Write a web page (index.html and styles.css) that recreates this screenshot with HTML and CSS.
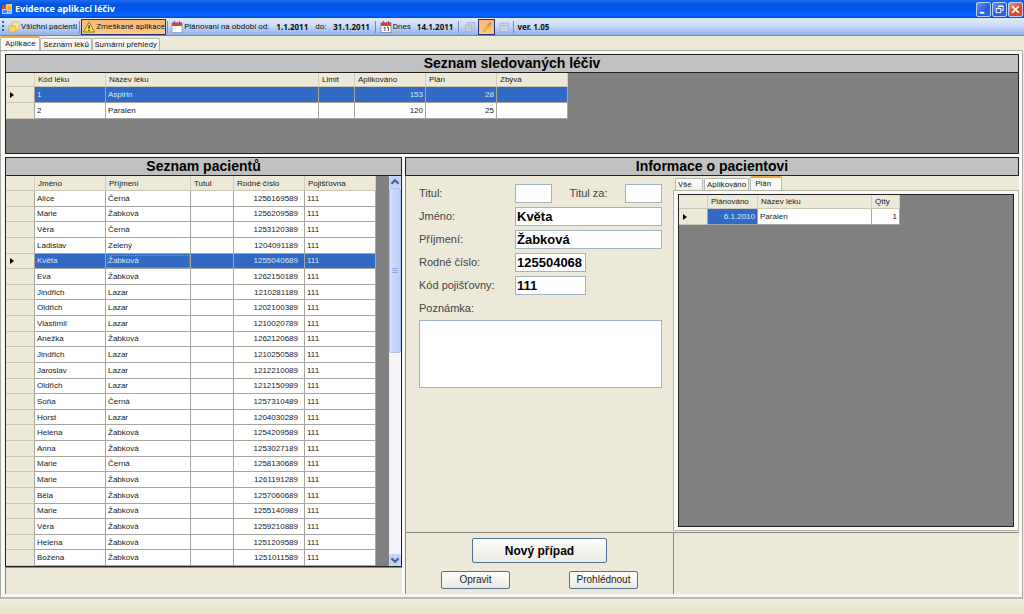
FILE: index.html
```html
<!DOCTYPE html>
<html lang="cs">
<head>
    <meta charset="UTF-8">
    <meta name="viewport" content="width=device-width, initial-scale=1.0">
    <title>Evidence aplikací léčiv</title>
    <link rel="stylesheet" href="styles.css">
</head>
<body>
    <header class="titlebar">
        <svg class="app-icon" viewBox="0 0 10 10" aria-hidden="true">
            <rect x="0" y="1" width="10" height="9" fill="#b9cdf2"/>
            <rect x="0" y="1" width="4" height="4" fill="#d9452b"/>
            <rect x="4" y="0" width="6" height="6" fill="#f4c54c"/>
            <rect x="1" y="6" width="4" height="3" fill="#4b86e8"/>
            <rect x="6" y="7" width="3" height="2" fill="#8aa9e0"/>
        </svg>
        <h1>Evidence aplikací léčiv</h1>
        <div class="window-buttons">
            <button class="win-button" aria-label="Minimalizovat">
                <svg viewBox="0 0 14 14"><path d="M3 10.500h5" stroke="#fff" stroke-width="2"/></svg>
            </button>
            <button class="win-button" aria-label="Obnovit">
                <svg viewBox="0 0 14 14" fill="none" stroke="#fff"><path d="M6 5V3.500h5V8H9"/><path d="M6 3.500h5" stroke-width="1.500"/><rect x="3.500" y="6" width="5" height="4.500"/></svg>
            </button>
            <button class="win-button close" aria-label="Zavřít">
                <svg viewBox="0 0 14 14"><path d="M3.500 3.500l7 7M10.500 3.500l-7 7" stroke="#fff" stroke-width="1.800"/></svg>
            </button>
        </div>
    </header>

    <div class="toolbar" role="toolbar">
        <span class="grip"></span>
        <button class="tool">
            <svg viewBox="0 0 12 12"><path d="M4 1h6l1 1v6l-2 1H4z" fill="#fbe9a0" stroke="#d9b24a" stroke-width=".7"/><path d="M1 5h6l1 1v4l-1 1H2L1 10z" fill="#f7d768" stroke="#cfa23a" stroke-width=".7"/></svg>
            Všichni pacienti
        </button>
        <span class="separator"></span>
        <button class="tool active">
            <svg viewBox="0 0 12 12"><path d="M6 1l5.500 10H.5z" fill="#ffe23c" stroke="#6b6420" stroke-width=".8" stroke-linejoin="round"/><path d="M6 4.200v3.600M6 8.800v1.200" stroke="#222" stroke-width="1.200"/></svg>
            Zmeškané aplikace
        </button>
        <span class="separator"></span>
        <span class="tool">
            <svg viewBox="0 0 12 12"><rect x="1" y="2" width="10" height="9.500" fill="#fff" stroke="#8a93a8" stroke-width=".7"/><rect x="1" y="1.500" width="10" height="3.500" fill="#d8414a"/><path d="M3.500 0v3M8.500 0v3" stroke="#666"/></svg>
            Plánovaní na období
        </span>
        <span class="text">od:</span>
        <b class="date">1.1.2011</b>
        <span class="text">do:</span>
        <b class="date">31.1.2011</b>
        <span class="separator wide"></span>
        <span class="tool">
            <svg viewBox="0 0 12 12"><rect x="1" y="2" width="10" height="9.500" fill="#fff" stroke="#6f7688" stroke-width=".7"/><rect x="1" y="1.500" width="10" height="3.500" fill="#d8414a"/><path d="M3.500 0v3M8.500 0v3" stroke="#666"/><path d="M3.500 6.500H5v3.500M7 6.500h1.500v3.500" fill="none" stroke="#333" stroke-width=".8"/></svg>
            Dnes
        </span>
        <b class="date today">14.1.2011</b>
        <span class="separator wide"></span>
        <button class="tool icon" aria-label="Kopírovat" disabled>
            <svg viewBox="0 0 12 12" fill="#c8d2e4" stroke="#a3b0c8" stroke-width=".8"><rect x="4" y="1.500" width="6.500" height="7"/><rect x="1.500" y="4" width="6" height="6.500"/><path d="M3 6.500h3M3 8.500h3"/></svg>
        </button>
        <button class="tool icon active" aria-label="Upravit">
            <svg viewBox="0 0 12 12"><path d="M2 11l1-3.500L8.500 2l2 2L5 9.500z" fill="#fbb040" stroke="#f09a3c" stroke-width=".7"/><path d="M7 4.500L10 1.500" stroke="#9c9468" stroke-width="1.500"/></svg>
        </button>
        <button class="tool icon" aria-label="Tabulka" disabled>
            <svg viewBox="0 0 12 12" fill="#c8d2e4" stroke="#a9b6cd" stroke-width=".8"><rect x="2" y="2" width="8.500" height="8.500"/><path d="M2 4.500h8.500"/></svg>
        </button>
        <span class="separator"></span>
        <b class="version">ver. 1.05</b>
    </div>

    <nav class="tabs main-tabs" role="tablist">
        <button class="tab selected" role="tab" aria-selected="true">Aplikace</button>
        <button class="tab" role="tab">Seznam léků</button>
        <button class="tab" role="tab">Sumární přehledy</button>
    </nav>

    <main class="page">
        <section class="medicines">
            <h2>Seznam sledovaných léčiv</h2>
            <div class="grid-view">
                <table class="data">
                    <colgroup><col class="c-mark"><col class="c-71"><col class="c-213"><col class="c-36"><col class="c-71"><col class="c-71"><col class="c-71"></colgroup>
                    <thead>
                        <tr><th></th><th>Kód léku</th><th>Název léku</th><th>Limit</th><th>Aplikováno</th><th>Plán</th><th>Zbývá</th></tr>
                    </thead>
                    <tbody>
                        <tr class="selected"><th class="current"></th><td>1</td><td>Aspirin</td><td></td><td class="num">153</td><td class="num">28</td><td></td></tr>
                        <tr><th></th><td>2</td><td>Paralen</td><td></td><td class="num">120</td><td class="num">25</td><td></td></tr>
                    </tbody>
                </table>
            </div>
        </section>

        <div class="columns">
            <section class="patients">
                <h2>Seznam pacientů</h2>
                <div class="grid-view">
                    <table class="data fill">
                        <colgroup><col class="c-mark"><col class="c-71"><col class="c-85"><col class="c-43"><col class="c-71"><col class="c-71"></colgroup>
                        <thead>
                            <tr><th></th><th>Jméno</th><th>Příjmení</th><th>Tutul</th><th>Rodné číslo</th><th>Pojišťovna</th></tr>
                        </thead>
                        <tbody id="patient-rows"></tbody>
                    </table>
                    <div class="scrollbar">
                        <button class="scroll-arrow" aria-label="Nahoru"><svg viewBox="0 0 10 10"><path d="M2 6.500l3-3 3 3" fill="none" stroke="#4d6185" stroke-width="1.800"/></svg></button>
                        <div class="scroll-track"><div class="scroll-thumb"></div></div>
                        <button class="scroll-arrow" aria-label="Dolů"><svg viewBox="0 0 10 10"><path d="M2 3.500l3 3 3-3" fill="none" stroke="#4d6185" stroke-width="1.800"/></svg></button>
                    </div>
                </div>
                <div class="footer-pane"></div>
            </section>

            <section class="info">
                <h2>Informace o pacientovi</h2>
                <div class="info-body">
                    <div class="form-side">
                        <form class="patient-form">
                            <label for="titul">Titul:</label>
                            <div class="titles">
                                <input type="text" id="titul" class="short">
                                <label for="titul-za">Titul za:</label>
                                <input type="text" id="titul-za" class="short">
                            </div>
                            <label for="jmeno">Jméno:</label>
                            <input type="text" id="jmeno" value="Květa">
                            <label for="prijmeni">Příjmení:</label>
                            <input type="text" id="prijmeni" value="Žabková">
                            <label for="rodne-cislo">Rodné číslo:</label>
                            <input type="text" id="rodne-cislo" class="medium" value="125504068">
                            <label for="pojistovna">Kód pojišťovny:</label>
                            <input type="text" id="pojistovna" class="medium" value="111">
                            <label for="poznamka">Poznámka:</label>
                            <textarea id="poznamka"></textarea>
                        </form>
                        <div class="actions">
                            <button class="button primary">Nový případ</button>
                            <div class="action-row">
                                <button class="button">Opravit</button>
                                <button class="button">Prohlédnout</button>
                            </div>
                        </div>
                    </div>

                    <div class="plan-side">
                        <div class="tabs plan-tabs" role="tablist">
                            <button class="tab" role="tab">Vše</button>
                            <button class="tab" role="tab">Aplikováno</button>
                            <button class="tab selected" role="tab" aria-selected="true">Plán</button>
                        </div>
                        <div class="plan-page">
                            <div class="grid-view">
                                <table class="data">
                                    <colgroup><col class="c-mark"><col class="c-50"><col class="c-114"><col class="c-28"></colgroup>
                                    <thead>
                                        <tr><th></th><th>Plánováno</th><th>Název léku</th><th>Qtty</th></tr>
                                    </thead>
                                    <tbody>
                                        <tr><th class="current"></th><td class="num picked">6.1.2010</td><td>Paralen</td><td class="num">1</td></tr>
                                    </tbody>
                                </table>
                            </div>
                        </div>
                        <div class="footer-pane"></div>
                    </div>
                </div>
            </section>
        </div>
    </main>

    <footer class="statusbar"></footer>

    <script>
        const patients = [
            ['Alice', 'Černá', '1256169589'],
            ['Marie', 'Žabková', '1256209589'],
            ['Věra', 'Černá', '1253120389'],
            ['Ladislav', 'Zelený', '1204091189'],
            ['Květa', 'Žabková', '1255040689'],
            ['Eva', 'Žabková', '1262150189'],
            ['Jindřich', 'Lazar', '1210281189'],
            ['Oldřich', 'Lazar', '1202100389'],
            ['Vlastimil', 'Lazar', '1210020789'],
            ['Anežka', 'Žabková', '1262120689'],
            ['Jindřich', 'Lazar', '1210250589'],
            ['Jaroslav', 'Lazar', '1212210089'],
            ['Oldřich', 'Lazar', '1212150989'],
            ['Soňa', 'Černá', '1257310489'],
            ['Horst', 'Lazar', '1204030289'],
            ['Helena', 'Žabková', '1254209589'],
            ['Anna', 'Žabková', '1253027189'],
            ['Marie', 'Černá', '1258130689'],
            ['Marie', 'Žabková', '1261191289'],
            ['Běla', 'Žabková', '1257060689'],
            ['Marie', 'Žabková', '1255140989'],
            ['Věra', 'Žabková', '1259210889'],
            ['Helena', 'Žabková', '1251209589'],
            ['Božena', 'Žabková', '1251011589']
        ];
        const selected = 4;

        document.getElementById('patient-rows').innerHTML = patients.map((p, i) => `
            <tr class="${i === selected ? 'selected' : ''}">
                <th class="${i === selected ? 'current' : ''}"></th>
                <td>${p[0]}</td>
                <td class="${i === selected ? 'focused' : ''}">${p[1]}</td>
                <td></td>
                <td class="num id">${p[2]}</td>
                <td>111</td>
            </tr>`).join('');
    </script>
</body>
</html>
```
FILE: styles.css
```css
* {
    box-sizing: border-box;
}

body {
    margin: 0;
    height: 100vh;
    display: flex;
    flex-direction: column;
    overflow: hidden;
    background-color: #ece9d8;
    color: #222;
    font-family: "Liberation Sans", Arial, sans-serif;
    font-size: 8px;
    line-height: 10px;
}

button, input, textarea {
    font: inherit;
    color: inherit;
    margin: 0;
    padding: 0;
    border: none;
    background: none;
}

h1, h2 {
    margin: 0;
}

/* Title bar */
.titlebar {
    height: 18px;
    flex: none;
    display: flex;
    align-items: center;
    gap: 3px;
    padding: 0 1px 0 2px;
    background: linear-gradient(#1c6cf0, #0054e0 25%, #0058ee 60%, #0866ff 85%, #0048c8);
}

.app-icon {
    width: 10px;
    height: 10px;
}

h1 {
    flex: 1;
    color: #fff;
    font-family: "Noto Sans", sans-serif;
    font-size: 9px;
    line-height: 12px;
}

.window-buttons {
    display: flex;
    gap: 1px;
}

.win-button {
    width: 15px;
    height: 15px;
    border: 1px solid #b9d0fa;
    border-radius: 2px;
    background: linear-gradient(135deg, #6a94f4, #2459dc 60%, #2c6cf0);
}

.win-button.close {
    background: linear-gradient(135deg, #f0957c, #d94b24 60%, #d8521f);
}

.win-button svg {
    display: block;
    width: 13px;
    height: 13px;
}

/* Toolbar */
.toolbar {
    height: 18px;
    flex: none;
    display: flex;
    align-items: center;
    padding-left: 2px;
    background: linear-gradient(#dfeafc, #c9dcf8 45%, #8fb0e8);
    border-bottom: 1px solid #6c88c4;
    color: #111;
    font-family: Roboto, sans-serif;
    white-space: nowrap;
}

.grip {
    width: 2px;
    height: 12px;
    margin-right: 2px;
    background: repeating-linear-gradient(#3a5ea8 0 2px, transparent 2px 4px);
}

.tool {
    height: 16px;
    display: flex;
    align-items: center;
    gap: 1px;
    padding-left: 1px;
    border: 1px solid transparent;
}

.tool svg {
    width: 12px;
    height: 12px;
}

.tool.active {
    border-color: #23306e;
    background: linear-gradient(#f9b777, #fdc98a);
}

.tool.icon {
    width: 17px;
    padding: 0;
    justify-content: center;
}

.separator {
    width: 1px;
    height: 12px;
    margin: 0 1px;
    background-color: #6c8ccb;
}

.separator.wide {
    margin: 0 2px 0 5px;
}

.text {
    margin: 0 7px;
}

.tool + .text {
    margin-left: 1px;
}

.date, .version {
    font-family: "Noto Sans", sans-serif;
}

.date.today {
    margin-left: 5px;
}

.version {
    margin-left: 2px;
}

/* Tabs */
.tabs {
    flex: none;
    display: flex;
    align-items: flex-end;
    gap: 1px;
    height: 14px;
    font-family: Roboto, sans-serif;
}

.tab {
    min-width: 28px;
    height: 12px;
    padding: 0 2px;
    border: 1px solid #b5b8b0;
    border-bottom: none;
    border-radius: 2px 2px 0 0;
    background: linear-gradient(#fff, #f0efe6);
    text-align: left;
    white-space: nowrap;
}

.tab.selected {
    min-width: 32px;
    height: 14px;
    padding: 0 4px;
    border-top: 2px solid #f0a83c;
    background: #fbfbf8;
}

.main-tabs {
    gap: 0;
}

.plan-tabs {
    padding-left: 2px;
}

/* Main page */
.page {
    flex: 1;
    min-height: 0;
    display: flex;
    flex-direction: column;
    gap: 3px;
    padding: 3px 3px 3px 4px;
    margin-right: 1px;
    border: 1px solid #a9aca5;
    border-bottom: 2px solid #b9b9b0;
    background-color: #f8f8f4;
}

h2 {
    height: 19px;
    flex: none;
    border: 1px solid #222;
    background-color: #c0c0c0;
    color: #000;
    font-size: 14px;
    line-height: 17px;
    text-align: center;
}

.grid-view {
    flex: 1;
    min-height: 0;
    display: flex;
    align-items: flex-start;
    border: 1px solid #222;
    border-top: none;
    background-color: #808080;
}

.medicines {
    flex: 0 0 100px;
    display: flex;
    flex-direction: column;
}

.columns {
    flex: 1;
    min-height: 0;
    display: flex;
    gap: 3px;
}

.patients {
    flex: 0 0 397px;
    display: flex;
    flex-direction: column;
}

.patients .footer-pane {
    flex: 0 0 27px;
}

.footer-pane {
    border-top: 1px solid #8c8a7c;
    border-left: 1px solid #8c8a7c;
    background-color: #ece9d8;
}

/* Data tables */
.data {
    table-layout: fixed;
    width: 1px;
    border-collapse: separate;
    border-spacing: 0;
}

.data.fill {
    height: 100%;
}

.c-mark { width: 29px; }
.c-28 { width: 28px; }
.c-36 { width: 36px; }
.c-43 { width: 43px; }
.c-50 { width: 50px; }
.c-71 { width: 71px; }
.c-85 { width: 85px; }
.c-114 { width: 114px; }
.c-213 { width: 213px; }

.data th, .data td {
    padding: 0 2px;
    text-align: left;
    font-weight: normal;
    white-space: nowrap;
    overflow: hidden;
}

.data th {
    background-color: #ece9d8;
    border-right: 1px solid #d0cdbc;
    border-bottom: 1px solid #cbc7b4;
}

.data thead th {
    height: 14px;
    padding-left: 3px;
}

.data.fill thead th {
    height: 15px;
    padding-top: 1px;
}

.data tbody th {
    border-right-color: #a8a698;
}

.data td {
    height: 15px;
    padding-top: 1px;
    border-right: 1px solid #a6a6a0;
    border-bottom: 1px solid #a6a6a0;
    background-color: #fff;
}

.medicines .data td, .plan-page .data td {
    height: 16px;
}

.data .num {
    text-align: right;
}

.data .id {
    padding-right: 6px;
}

.data .selected td, .data .picked {
    background-color: #316ac5;
    color: #dce6f6;
}

.data td.focused {
    outline: 1px dotted #c98a3a;
    outline-offset: -2px;
}

.data th.current::before {
    content: "";
    display: block;
    width: 0;
    margin-left: 2px;
    border: 3px solid transparent;
    border-left: 4px solid #000;
    border-right: none;
}

/* Scrollbar */
.scrollbar {
    align-self: stretch;
    width: 12px;
    margin-left: auto;
    display: flex;
    flex-direction: column;
    background-color: #f3f3f8;
}

.scroll-arrow {
    height: 12px;
    border-radius: 2px;
    background: #c3d3fb;
}

.scroll-arrow svg {
    display: block;
    width: 12px;
    height: 12px;
}

.scroll-track {
    flex: 1;
}

.scroll-thumb {
    height: 45%;
    display: flex;
    align-items: center;
    justify-content: center;
    border: 1px solid #a9bfee;
    border-radius: 2px;
    background: linear-gradient(90deg, #d0defd, #bccffa);
}

.scroll-thumb::before {
    content: "";
    width: 6px;
    height: 5px;
    background: repeating-linear-gradient(#90a8e0 0 1px, transparent 1px 2px);
}

/* Patient detail */
.info {
    flex: 1;
    min-width: 0;
    display: flex;
    flex-direction: column;
}

.info-body {
    flex: 1;
    min-height: 0;
    display: flex;
}

.form-side {
    flex: 0 0 268px;
    display: flex;
    flex-direction: column;
    border-left: 1px solid #8c8a7c;
    background-color: #ece9d8;
}

.patient-form {
    flex: 1;
    display: grid;
    grid-template-columns: 96px 1fr;
    grid-auto-rows: 19px;
    align-content: start;
    gap: 4px 0;
    padding: 8px 11px 0 13px;
}

.patient-form label {
    color: #444;
    font-size: 11px;
    line-height: 19px;
}

.titles {
    display: flex;
    justify-content: space-between;
}

input, textarea {
    width: 100%;
    border: 1px solid #9fb3c4;
    background-color: #fff;
    color: #000;
    font-size: 13px;
    font-weight: bold;
}

input {
    height: 19px;
    padding: 0 1px;
}

.short {
    width: 37px;
}

.medium {
    width: 71px;
}

textarea {
    grid-column: 1 / -1;
    height: 68px;
    margin-top: -2px;
    resize: none;
}

.actions {
    flex: 0 0 62px;
    display: flex;
    flex-direction: column;
    align-items: center;
    gap: 8px;
    padding-top: 5px;
    border-top: 1px solid #8c8a7c;
}

.action-row {
    width: 197px;
    display: flex;
    justify-content: space-between;
}

.button {
    width: 69px;
    height: 18px;
    border: 1px solid #4f7391;
    border-radius: 2px;
    background: linear-gradient(#fdfdfc, #eceae2);
    font-size: 10px;
    line-height: 16px;
}

.button.primary {
    width: 135px;
    height: 25px;
    color: #000;
    font-size: 12px;
    font-weight: bold;
}

.plan-side {
    flex: 1;
    min-width: 0;
    display: flex;
    flex-direction: column;
    background-color: #ece9d8;
}

.plan-side .footer-pane {
    flex: 0 0 62px;
}

.plan-page {
    flex: 1;
    min-height: 0;
    display: flex;
    margin-bottom: 1px;
    padding: 3px 4px;
    border: 1px solid #b4b4a8;
    background-color: #fbfbf8;
}

.plan-page .grid-view {
    border-top: 1px solid #222;
}

.statusbar {
    flex: 0 0 15px;
    background: linear-gradient(#f2f0e2, #ece9d8 30%, #e6e2c8);
}
```
